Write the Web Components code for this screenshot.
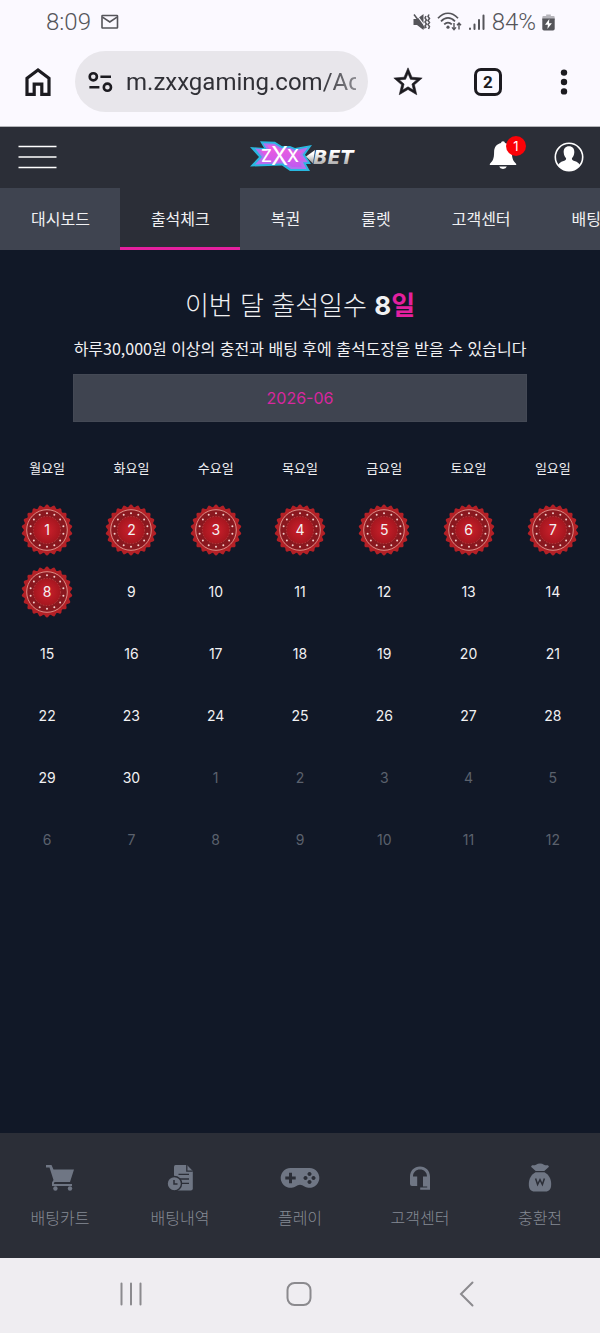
<!DOCTYPE html>
<html lang="ko">
<head>
<meta charset="utf-8">
<meta name="viewport" content="width=device-width, initial-scale=1">
<title>출석체크</title>
<style>
  body {
    margin: 0;
    font-family: Inter, "Noto Sans CJK KR", sans-serif;
    font-size: 16px;
    line-height: 24px;
    color: #f1f1f3;
    background: #111827;
  }
</style>
</head>
<body>
<attendance-app></attendance-app>

<script>
  const define = (name, html, setup) => {
    customElements.define(name, class extends HTMLElement {
      constructor() {
        super();
        this.attachShadow({ mode: "open" });
        this.shadowRoot.innerHTML = html;
      }

      connectedCallback() {
        if (setup) setup(this, this.shadowRoot);
      }
    });
  };

  // phone status bar
  define("status-bar", `
    <style>
      :host {
        display: flex;
        align-items: center;
        height: 44px;
        padding: 0 45px 0 46px;
        color: #55555a;
        font: 300 24px/28px Roboto, sans-serif;
      }
      .left, .right { display: flex; align-items: center; }
      .left { gap: 10px; }
      .right { gap: 6px; margin-left: auto; }
      svg { display: block; }
    </style>
    <div class="left">
      <span>8:09</span>
      <svg width="18" height="16" viewBox="0 0 18 16" fill="none" stroke="currentColor" stroke-width="1.6">
        <rect x="1" y="1.5" width="15.5" height="12.5" rx=".6"/>
        <path d="M1.5 3.2 8.8 8 16 3.2"/>
      </svg>
    </div>
    <div class="right">
      <svg width="18" height="18" viewBox="0 0 18 18">
        <path fill="currentColor" d="M.5 6H4l6.5-5v16L4 12H.5z"/>
        <path fill="none" stroke="#fbf9ff" stroke-width="1.1" d="M3 1.2 12 13.2"/>
        <path fill="none" stroke="currentColor" stroke-width="1.5" d="M1 1.5 11.5 15.5M13 3l-1 2 1.4 2L12 9l1.4 2-1.4 2 1.2 2M16 1.5l-1 2 1.5 2-1.5 2 1.5 2-1.5 2 1.5 2-1 2.5"/>
      </svg>
      <svg width="25" height="20" viewBox="0 0 25 20" fill="none" stroke="currentColor" stroke-width="1.7">
        <path d="M1 6.2C7-.4 15-.4 21 6.2M4 9.3c4.4-4.5 9.6-4.5 14 0M7.2 12.4c2.4-2.5 5.2-2.5 7.6 0"/>
        <circle cx="11" cy="15.2" r="1.6" fill="currentColor" stroke="none"/>
        <path d="M17 11v6M15 15.4l2 2.2 2-2.2M22 17.5v-6M20 13.2l2-2.2 2 2.2" stroke-width="1.4"/>
      </svg>
      <svg width="18" height="18" viewBox="0 0 18 18" fill="none" stroke="currentColor" stroke-width="2" stroke-linecap="round">
        <path d="M2 15.5v.5M6.5 11.5V16M11 7v9M15.5 2.5V16"/>
      </svg>
      <span>84%</span>
      <svg width="13" height="17" viewBox="0 0 13 17">
        <path fill="#b5b4ba" d="M4.2.5h4.6V2h2.7q1.2 0 1.2 1.2V6H.3V3.2Q.3 2 1.5 2h2.7z"/>
        <path fill="currentColor" d="M.3 4.5h12.4v10.3q0 1.7-1.7 1.7H2q-1.7 0-1.7-1.7z"/>
        <path fill="#fff" d="M7.3 5 3 10.8h2.9L5.4 15l4.5-5.8H7z"/>
      </svg>
    </div>
  `);

  // address bar
  define("browser-bar", `
    <style>
      :host {
        display: flex;
        align-items: center;
        padding: 7px 0 14px;
        color: #1c1b20;
        border-bottom: 1px solid #b4b5b9;
      }
      button {
        display: grid;
        place-items: center;
        box-sizing: border-box;
        width: 80px;
        height: 61px;
        padding: 0;
        border: 0;
        background: none;
        color: inherit;
      }
      .home { width: 75px; }
      .menu { width: 72px; }
      .url {
        flex: 1;
        min-width: 0;
        display: flex;
        align-items: center;
        gap: 13px;
        height: 61px;
        box-sizing: border-box;
        padding: 0 12px;
        border-radius: 31px;
        background: #e8e6eb;
      }
      .url svg { flex: none; }
      input {
        flex: 1;
        min-width: 0;
        padding: 0;
        border: 0;
        outline: 0;
        background: none;
        color: #303036;
        font: 400 24px/32px Roboto, sans-serif;
        -webkit-mask-image: linear-gradient(to left, rgba(0, 0, 0, .5), #000 36px);
        mask-image: linear-gradient(to left, rgba(0, 0, 0, .5), #000 36px);
      }
      .count {
        display: grid;
        place-items: center;
        box-sizing: border-box;
        width: 28px;
        height: 28px;
        border: 3px solid;
        border-radius: 7px;
        font: 700 17px/20px Roboto, sans-serif;
      }
    </style>
    <button class="home" aria-label="홈">
      <svg width="28" height="30" viewBox="0 0 28 30" fill="none" stroke="currentColor" stroke-width="3.2">
        <path d="M3 27.4V11.2L14 3l11 8.2v16.2h-7.2V17.2h-7.6v10.2z"/>
      </svg>
    </button>
    <div class="url">
      <svg width="26" height="22" viewBox="0 0 26 22" fill="none" stroke="currentColor" stroke-width="2.6">
        <circle cx="6.3" cy="5.8" r="3.6"/><path d="M13.4 5.8H24M2.4 16.2h10"/><circle cx="20.4" cy="16.2" r="3.6"/>
      </svg>
      <input type="text" value="m.zxxgaming.com/Ac" aria-label="주소">
    </div>
    <button aria-label="북마크">
      <svg width="34" height="34" viewBox="0 0 24 24" fill="currentColor">
        <path d="M22 9.24l-7.19-.62L12 2 9.19 8.63 2 9.24l5.46 4.73L5.82 21 12 17.27 18.18 21l-1.63-7.03L22 9.24zM12 15.4l-3.76 2.27 1-4.28-3.32-2.88 4.38-.38L12 6.1l1.71 4.04 4.38.38-3.32 2.88 1 4.28L12 15.4z" stroke="currentColor" stroke-width=".4"/>
      </svg>
    </button>
    <button aria-label="탭"><span class="count">2</span></button>
    <button class="menu" aria-label="메뉴">
      <svg width="8" height="28" viewBox="0 0 8 28" fill="currentColor">
        <circle cx="4" cy="4.6" r="3.2"/><circle cx="4" cy="14" r="3.2"/><circle cx="4" cy="23.4" r="3.2"/>
      </svg>
    </button>
  `);

  define("site-logo", `
    <style>
      :host { display: block; }
      svg { display: block; }
    </style>
    <svg width="112" height="32" viewBox="-6 0 112 32" role="img" aria-label="ZXX BET">
      <defs>
        <linearGradient id="silver" x1="0" y1="0" x2="0" y2="1">
          <stop offset=".3" stop-color="#fff"/><stop offset="1" stop-color="#999"/>
        </linearGradient>
        <linearGradient id="pink" x1="0" y1="0" x2="0" y2="1">
          <stop offset="0" stop-color="#f45bdc"/><stop offset="1" stop-color="#c05af0"/>
        </linearGradient>
      </defs>
      <path fill="#28b8e0" d="M0 6 14 7 10 .3 25 .8 32 5.3 40 5 45 7 62 4 55 13.7 61 23 56 23 60 30 40 30 32 24.5 0 25.5 9 16z"/>
      <path fill="#b072f0" d="M5 7.5 17 8.8 13 2.2 24.5 2.7 31.5 7 40 6.7 45 9 58 6.5 52.5 13.7 58 21.2 53 21.2 56.5 28 41 28 33 22.5 5 23.5 12 16z"/>
      <path fill="url(#pink)" d="M10 9 21 10.3 17 4.2 24 4.5 31 8.8 39.5 8.5 45 11 54 9 49.5 13.7 54.5 19.5 49 19.5 52 26 42 26 34 20.5 10 21.8 15.5 16z"/>
      <text y="21" font-family="Inter, sans-serif" font-size="17" font-weight="500" fill="#fff"><tspan x="11">Z</tspan><tspan x="21" y="24" font-size="25" font-weight="400">X</tspan><tspan x="37" y="21">X</tspan></text>
      <path fill="url(#silver)" d="M56 15.5 65 9 63 22.500z"/>
      <text x="63" y="22.5" font-family="DejaVu Sans, sans-serif" font-size="19" font-weight="700" font-style="italic" fill="url(#silver)">BET</text>
    </svg>
  `);

  define("site-header", `
    <style>
      :host {
        box-sizing: border-box;
        display: grid;
        grid-template-columns: 1fr auto 1fr;
        align-items: center;
        height: 61px;
        padding: 0 16px 2px;
        background: #2b2e37;
      }
      button {
        display: grid;
        place-items: center;
        padding: 0;
        border: 0;
        background: none;
        color: #fff;
      }
      .menu { justify-self: start; }
      .actions {
        display: flex;
        justify-content: flex-end;
        align-items: center;
        gap: 37px;
      }
      .bell { position: relative; padding-bottom: 4px; }
      .badge {
        position: absolute;
        top: -4px;
        right: -9px;
        width: 20px;
        height: 20px;
        border-radius: 50%;
        background: #fb0207;
        font: 400 13px/20px Inter, sans-serif;
        text-align: center;
      }
    </style>
    <button class="menu" aria-label="전체메뉴">
      <svg width="43" height="26" viewBox="0 0 43 26" stroke="#fff" stroke-width="1.6">
        <path d="M2.5 2.5h38M2.5 13h38M2.5 23.5h38"/>
      </svg>
    </button>
    <site-logo></site-logo>
    <div class="actions">
      <button class="bell" aria-label="알림">
        <svg width="28" height="30" viewBox="0 0 28 30" fill="#fff">
          <path d="M14 1.2a2 2 0 0 0-2 1.9C7.6 4 5.1 7.5 5.1 11.8c0 7.4-1.4 9.4-4.3 12.1v1.2h26.4v-1.2c-2.9-2.7-4.3-4.7-4.3-12.1C22.9 7.5 20.4 4 16 3.1a2 2 0 0 0-2-1.900z"/>
          <path d="M10.2 26.6h7.6a3.9 3.2 0 0 1-7.6 0z"/>
        </svg>
        <span class="badge">1</span>
      </button>
      <button aria-label="내 정보">
        <svg width="30" height="30" viewBox="0 0 30 30">
          <circle cx="15" cy="15" r="13.7" fill="none" stroke="#fff" stroke-width="1.6"/>
          <path fill="#fff" d="M15 4.2c3.5 0 5.6 2.5 5.3 6.2-.2 3-1.3 4.6-2.3 5.6-.4 1.7.3 2.2 2.4 2.9 3.4 1.1 5 2.4 5.5 4.6A13.5 13.5 0 0 1 15 28.5 13.5 13.5 0 0 1 4.1 23.5c.5-2.2 2.1-3.5 5.5-4.6 2.1-.7 2.8-1.2 2.4-2.9-1-1-2.1-2.6-2.3-5.6C9.4 6.7 11.5 4.2 15 4.2z"/>
        </svg>
      </button>
    </div>
  `);

  define("tab-bar", `
    <style>
      :host {
        display: flex;
        overflow: hidden;
        background: #3f4450;
      }
    </style>
    <slot></slot>
  `);

  define("tab-link", `
    <style>
      :host { display: block; flex: none; }
      a {
        display: block;
        height: 59px;
        padding: 0 30px 0 31px;
        border-bottom: 3px solid transparent;
        color: inherit;
        line-height: 62px;
        text-decoration: none;
        white-space: nowrap;
      }
      :host([active]) a {
        background: #2b2e37;
        border-color: #e4209f;
      }
    </style>
    <a href="#"><slot></slot></a>
  `);

  // scalloped seal outline around the centre of a 52x52 box
  const sealPath = () => {
    const points = [];
    for (let i = 0; i < 176; i++) {
      const angle = i * Math.PI / 88;
      const r = 24.3 + 1.2 * Math.cos(angle * 22);
      points.push(`${(26 + r * Math.sin(angle)).toFixed(2)} ${(26 - r * Math.cos(angle)).toFixed(2)}`);
    }
    return `M${points.join("L")}z`;
  };

  const sealDots = () => {
    let dots = "";
    for (let i = 0; i < 14; i++) {
      const angle = i * Math.PI / 7;
      dots += `<circle cx="${(26 + 16.8 * Math.sin(angle)).toFixed(2)}" cy="${(26 - 16.8 * Math.cos(angle)).toFixed(2)}" r="1"/>`;
    }
    return dots;
  };

  define("day-stamp", `
    <style>
      :host {
        display: inline-grid;
        place-items: center;
        vertical-align: middle;
      }
      svg, slot { grid-area: 1 / 1; }
      slot { display: block; }
    </style>
    <svg width="52" height="52" viewBox="0 0 52 52" aria-hidden="true">
      <defs>
        <radialGradient id="core">
          <stop offset="0" stop-color="#cc202b"/><stop offset="1" stop-color="#a5161f"/>
        </radialGradient>
      </defs>
      <path fill="#b32026" d="${sealPath()}"/>
      <circle cx="26" cy="26" r="20.3" fill="#8a181f" stroke="#dc8c86" stroke-width="1"/>
      <circle cx="26" cy="26" r="13.6" fill="url(#core)" stroke="#c04a4a" stroke-width=".7" stroke-dasharray="1.5 1.5"/>
      <g fill="#f3cfcb">${sealDots()}</g>
    </svg>
    <slot></slot>
  `);

  define("attendance-calendar", `
    <style>
      :host { display: block; padding: 0 5px; }
      table {
        width: 100%;
        border-collapse: collapse;
        table-layout: fixed;
        text-align: center;
      }
      th, td { padding: 0; vertical-align: middle; }
      th {
        height: 62px;
        font-size: 13px;
        font-weight: 400;
        line-height: 20px;
      }
      td {
        height: 62px;
        font-size: 14px;
        line-height: 20px;
      }
      .other { color: #5b616d; }
    </style>
    <table>
      <thead><tr></tr></thead>
      <tbody></tbody>
    </table>
  `, (host, root) => {
    const [year, month] = host.getAttribute("month").split("-").map(Number);
    const attended = Number(host.getAttribute("attended"));
    const days = new Date(year, month, 0).getDate();
    const offset = (new Date(year, month - 1, 1).getDay() + 6) % 7;

    root.querySelector("thead tr").innerHTML =
      [..."월화수목금토일"].map((d) => `<th scope="col">${d}요일</th>`).join("");

    let rows = "";
    for (let week = 0; week < 6; week++) {
      rows += "<tr>";
      for (let i = 0; i < 7; i++) {
        const n = week * 7 + i + 1 - offset;
        const day = new Date(year, month - 1, n).getDate();
        if (n < 1 || n > days) rows += `<td class="other">${day}</td>`;
        else if (n <= attended) rows += `<td><day-stamp>${day}</day-stamp></td>`;
        else rows += `<td>${day}</td>`;
      }
      rows += "</tr>";
    }
    root.querySelector("tbody").innerHTML = rows;
  });

  define("attendance-page", `
    <style>
      :host { display: block; padding-top: 34px; text-align: center; }
      h1, p { font-family: "Noto Sans CJK KR", sans-serif; }
      h1 {
        margin: 0 0 10px;
        font-size: 26px;
        font-weight: 300;
        line-height: 40px;
      }
      strong {
        font-family: Inter, "Noto Sans CJK KR", sans-serif;
        font-weight: 700;
      }
      em { color: #e4209f; font-style: normal; }
      p { margin: 0 0 14px; }
      .month { padding: 0 73px; margin-bottom: 15px; }
      input {
        display: block;
        box-sizing: border-box;
        width: 100%;
        height: 48px;
        padding: 0;
        border: 1px solid #444955;
        background: #3f4450;
        color: #d8279f;
        font: inherit;
        text-align: center;
      }
    </style>
    <h1>이번 달 출석일수 <strong>8<em>일</em></strong></h1>
    <p>하루30,000원 이상의 충전과 배팅 후에 출석도장을 받을 수 있습니다</p>
    <div class="month"><input type="text" value="2026-06" aria-label="조회 월" readonly></div>
    <attendance-calendar month="2026-06" attended="8"></attendance-calendar>
  `);

  define("bottom-nav", `
    <style>
      :host {
        display: grid;
        grid-template-columns: repeat(5, 1fr);
        background: #2b2e37;
      }
    </style>
    <slot></slot>
  `);

  const navIcons = {
    cart: `
      <path d="M6 2h5.5l2 4.5H34l-4 12.5H14.5l-.8 2H32v2H12v-3.5L13.5 17 9.5 4.5H6z"/>
      <circle cx="15.4" cy="25.5" r="2.2"/><circle cx="30" cy="25.5" r="2.2"/>`,
    history: `
      <path d="M15.5 2H27l5.8 6v17.5q0 2-2 2H16q-2 0-2-2V4q0-2 1.5-2z"/>
      <path fill="none" stroke="#2b2e37" stroke-width="1.3" d="M26.8 2v6.2h6M18.5 11.3H29M20 16h9M22 20.3h7"/>
      <circle cx="14.3" cy="20.7" r="7.2" stroke="#2b2e37" stroke-width="1.4"/>
      <path fill="none" stroke="#2b2e37" stroke-width="1.5" d="M14 17v4h3.5"/>`,
    play: `
      <path fill-rule="evenodd" d="M10.5 5h19a9.9 9.9 0 1 1-5.5 18.2q-1.5-1.5-4-1.5t-4 1.5A9.9 9.9 0 1 1 10.5 5zM9 9.8v3.7H5.3v3H9v3.7h3v-3.7h3.7v-3H12V9.8zM29.5 9a2 2 0 1 0 .01 0zM29.5 17a2 2 0 1 0 .01 0zM25.5 13a2 2 0 1 0 .01 0zM33.5 13a2 2 0 1 0 .01 0z"/>`,
    support: `
      <path d="M20 3.5c5.7 0 10 4.3 10 10v13.3H20.2v-2.2h7v-1.2H23V13.5h4c0-4.3-3-7-7-7s-7 2.7-7 7h4.2v9.6H12q-2 0-2-2v-7.600c0-5.700 4.300-10 10-10z"/>`,
    money: `
      <path d="M12 2.2q2.4.4 4-.5 1.8-1.2 4-1.2t4 1.2q1.6.9 4 .5l1 1.5L24.3 8h-8.6L11 3.700z"/>
      <path d="M15.5 9.2h9c4 2.3 6.7 6.5 6.7 11.8 0 5.5-2.2 7.5-5.7 7.5h-11c-3.5 0-5.700-2-5.700-7.500 0-5.300 2.700-9.500 6.700-11.800z"/>
      <path fill="none" stroke="#2b2e37" stroke-width="1.5" d="m15.6 15.5 2 6 2.4-4.8 2.4 4.8 2-6"/>`,
  };

  define("nav-item", `
    <style>
      :host { display: block; }
      a {
        display: flex;
        flex-direction: column;
        align-items: center;
        gap: 11px;
        padding: 30px 0 28px;
        color: #858a94;
        font-weight: 300;
        text-decoration: none;
      }
      svg { fill: #6f7684; }
    </style>
    <a href="#">
      <svg width="40" height="32" viewBox="0 0 40 32" aria-hidden="true"></svg>
      <slot></slot>
    </a>
  `, (host, root) => {
    root.querySelector("svg").innerHTML = navIcons[host.getAttribute("icon")];
  });

  // android navigation buttons
  define("system-nav", `
    <style>
      :host {
        display: grid;
        grid-template-columns: repeat(3, 1fr);
        height: 75px;
        padding: 0 49px 0 47px;
        background: #efedf1;
      }
      button {
        display: grid;
        place-items: center;
        padding: 0 0 4px;
        border: 0;
        background: none;
      }
      svg { fill: none; stroke: #8b8a8e; stroke-width: 2; stroke-linecap: round; }
    </style>
    <button aria-label="최근 앱">
      <svg width="26" height="26" viewBox="0 0 26 26"><path d="M3.5 2.5v21M13 2.5v21M22.5 2.5v21"/></svg>
    </button>
    <button aria-label="홈 화면">
      <svg width="26" height="26" viewBox="0 0 26 26"><rect x="1.5" y="2" width="23" height="22" rx="7"/></svg>
    </button>
    <button aria-label="뒤로">
      <svg width="26" height="26" viewBox="0 0 26 26"><path d="M18.5 1.5 7 13l11.5 11.5"/></svg>
    </button>
  `);

  define("attendance-app", `
    <style>
      :host {
        display: flex;
        flex-direction: column;
        min-height: 100vh;
      }
      header { background: #fbf9ff; }
      main { flex: 1; }
    </style>
    <header>
      <status-bar></status-bar>
      <browser-bar></browser-bar>
    </header>
    <site-header></site-header>
    <tab-bar>
      <tab-link>대시보드</tab-link>
      <tab-link active>출석체크</tab-link>
      <tab-link>복권</tab-link>
      <tab-link>룰렛</tab-link>
      <tab-link>고객센터</tab-link>
      <tab-link>배팅</tab-link>
    </tab-bar>
    <main><attendance-page></attendance-page></main>
    <bottom-nav>
      <nav-item icon="cart">배팅카트</nav-item>
      <nav-item icon="history">배팅내역</nav-item>
      <nav-item icon="play">플레이</nav-item>
      <nav-item icon="support">고객센터</nav-item>
      <nav-item icon="money">충환전</nav-item>
    </bottom-nav>
    <system-nav></system-nav>
  `);
</script>
</body>
</html>
